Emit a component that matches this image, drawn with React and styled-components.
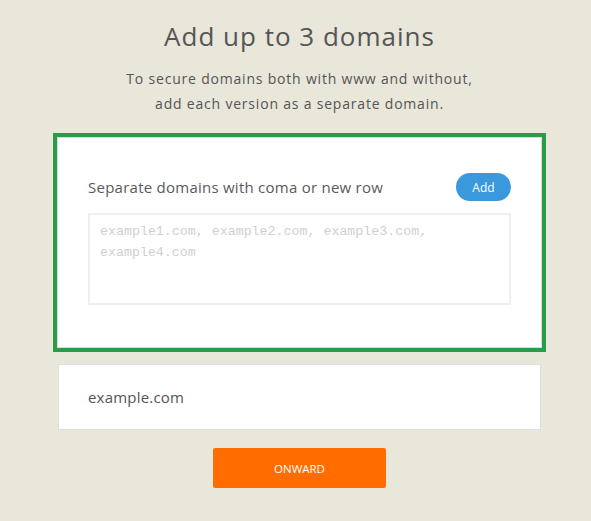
import React from "react";
import styled, { createGlobalStyle } from "styled-components";

const GlobalStyle = createGlobalStyle`
  html, body {
    margin: 0;
    padding: 0;
    background: #e9e6da;
  }
  body {
    font-family: "Open Sans", "Liberation Sans", sans-serif;
    color: #555;
  }
`;

const Page = styled.main`
  min-height: 521px;
  box-sizing: border-box;
  padding: 20px 0 0 8px;
  display: flex;
  flex-direction: column;
  align-items: center;
`;

const Title = styled.h1`
  margin: 0;
  font-size: 26px;
  line-height: 32px;
  font-weight: 400;
  letter-spacing: 1px;
  color: #555;
`;

const Lead = styled.p`
  margin: 14px 0 0;
  font-size: 14px;
  line-height: 25px;
  letter-spacing: 0.8px;
  text-align: center;
  color: #555;
`;

const Card = styled.section`
  box-sizing: border-box;
  width: 483px;
  background: #fff;
  border: 1px solid #dedede;
  margin-top: ${p => p.$top}px;
  ${p =>
    p.$active &&
    `
    border: none;
    box-shadow: 0 0 0 1px #dcdcd6, 0 0 0 5px #2a9b48;
  `}
`;

const EntryCard = styled(Card)`
  padding: 35px 30px 42px;
`;

const Header = styled.div`
  display: flex;
  align-items: center;
  justify-content: space-between;
  height: 28px;
`;

const Label = styled.span`
  font-size: 15px;
  letter-spacing: 0.25px;
  color: #5a5a5a;
`;

const AddButton = styled.button`
  width: 55px;
  height: 28px;
  border: none;
  border-radius: 14px;
  background: #3a99dc;
  color: #fff;
  font-family: inherit;
  font-size: 12px;
  padding: 0;
  cursor: pointer;
`;

const Domains = styled.textarea`
  display: block;
  box-sizing: border-box;
  width: 100%;
  height: 92px;
  margin-top: 12px;
  padding: 6px 10px;
  border: 2px solid #efefef;
  resize: none;
  outline: none;
  font-family: "Liberation Mono", "Courier New", monospace;
  font-size: 13.3px;
  line-height: 21px;
  color: #555;

  &::placeholder {
    color: #cfcfcf;
  }
`;

const DomainRow = styled(Card)`
  height: 66px;
  padding: 0 29px;
  display: flex;
  align-items: center;
  font-size: 15px;
  letter-spacing: 0.2px;
  color: #555;
`;

const Onward = styled.button`
  margin-top: 18px;
  width: 173px;
  height: 40px;
  border: none;
  border-radius: 2px;
  background: #ff6d00;
  color: #fff;
  font-family: inherit;
  font-size: 11.5px;
  text-transform: uppercase;
  cursor: pointer;
`;

const App = () => {
  return (
    <>
      <GlobalStyle />
      <Page>
        <Title>Add up to 3 domains</Title>
        <Lead>
          To secure domains both with www and without,
          <br />
          add each version as a separate domain.
        </Lead>
        <EntryCard $active $top={22}>
          <Header>
            <Label>Separate domains with coma or new row</Label>
            <AddButton>Add</AddButton>
          </Header>
          <Domains placeholder="example1.com, example2.com, example3.com, example4.com" />
        </EntryCard>
        <DomainRow $top={17}>example.com</DomainRow>
        <Onward>Onward</Onward>
      </Page>
    </>
  );
};

export default App;
